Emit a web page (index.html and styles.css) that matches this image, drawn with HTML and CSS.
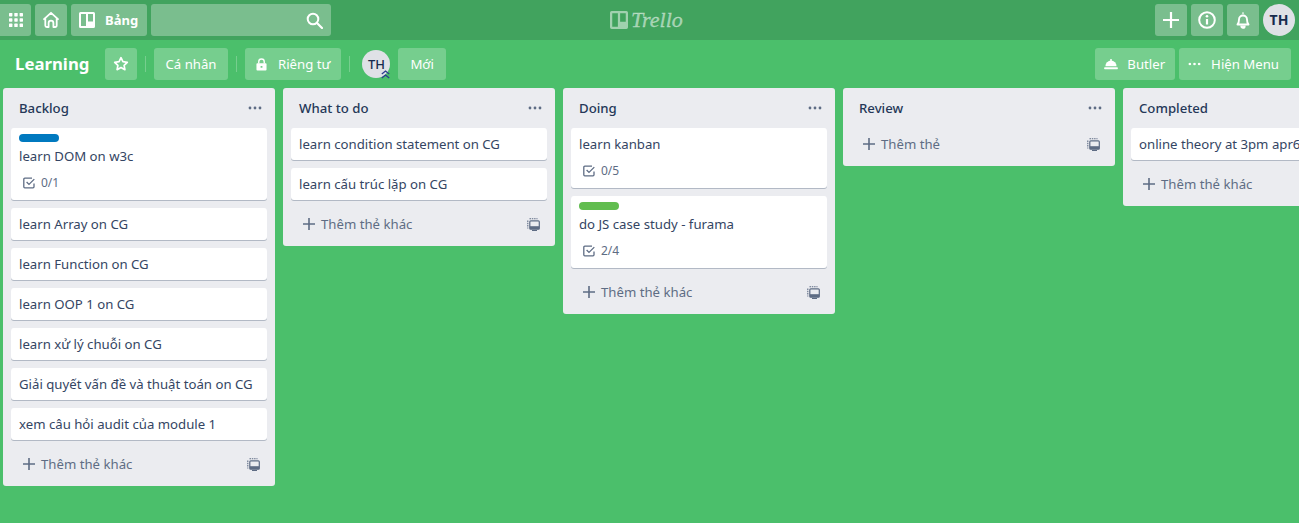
FILE: index.html
```html
<!DOCTYPE html>
<html lang="vi">
<head>
<meta charset="utf-8">
<title>Learning | Trello</title>
<link rel="stylesheet" href="styles.css">
</head>
<body>
<svg class="defs" width="0" height="0" aria-hidden="true">
  <symbol id="i-check" viewBox="0 0 12 12"><path d="M11 6.500V9.800a1 1 0 0 1-1 1H1.800a1 1 0 0 1-1-1V2.200a1 1 0 0 1 1-1H9" fill="none" stroke="currentColor" stroke-width="1.300"/><path d="M3.600 5 6 7.400 11.300 2.100" fill="none" stroke="currentColor" stroke-width="1.300"/></symbol>
  <symbol id="i-plus" viewBox="0 0 12 12"><path d="M6 0v12M0 6h12" stroke="currentColor" stroke-width="1.600"/></symbol>
  <symbol id="i-tpl" viewBox="0 0 13 13"><rect x="2.800" y="2.800" width="9.500" height="8.400" rx="1" fill="none" stroke="currentColor" stroke-width="1.200"/><rect x="2.800" y="8.200" width="9.500" height="3" fill="currentColor"/><path d="M2.500 .8h8M.8 2.500v8" stroke="currentColor" stroke-width="1.100" stroke-dasharray="1.500 .8"/><path d="M5 12.500h5" stroke="currentColor" stroke-width="1"/></symbol>
  <symbol id="i-dots" viewBox="0 0 14 4"><circle cx="2" cy="2" r="1.400" fill="currentColor"/><circle cx="7" cy="2" r="1.400" fill="currentColor"/><circle cx="12" cy="2" r="1.400" fill="currentColor"/></symbol>
  <symbol id="i-board" viewBox="0 0 16 16"><path fill-rule="evenodd" d="M1.500 0h13A1.500 1.500 0 0 1 16 1.500v13a1.500 1.500 0 0 1-1.500 1.500h-13A1.500 1.500 0 0 1 0 14.500v-13A1.500 1.500 0 0 1 1.500 0zM2 2v12h5v-12zM9 2v7.500h5v-7.500z" fill="currentColor"/></symbol>
</svg>

<header class="topbar">
  <a class="tbtn tbtn-apps"><svg width="14" height="14" viewBox="0 0 14 14" fill="currentColor"><rect width="3.400" height="3.400" rx=".6"/><rect x="5.300" width="3.400" height="3.400" rx=".6"/><rect x="10.600" width="3.400" height="3.400" rx=".6"/><rect y="5.300" width="3.400" height="3.400" rx=".6"/><rect x="5.300" y="5.300" width="3.400" height="3.400" rx=".6"/><rect x="10.600" y="5.300" width="3.400" height="3.400" rx=".6"/><rect y="10.600" width="3.400" height="3.400" rx=".6"/><rect x="5.300" y="10.600" width="3.400" height="3.400" rx=".6"/><rect x="10.600" y="10.600" width="3.400" height="3.400" rx=".6"/></svg></a>
  <a class="tbtn"><svg width="18" height="18" viewBox="0 0 18 18"><path d="M2 8.200 9 1.800l7 6.400M3.300 7.200v7.300a1.500 1.500 0 0 0 1.500 1.500h1.800v-4a2.400 2.400 0 0 1 4.800 0v4h1.800a1.500 1.500 0 0 0 1.500-1.500V7.200" fill="none" stroke="currentColor" stroke-width="1.800" stroke-linejoin="round" stroke-linecap="round"/></svg></a>
  <a class="tbtn tbtn-boards"><svg width="16" height="16"><use href="#i-board"/></svg><span>Bảng</span></a>
  <div class="search"><svg width="17" height="17" viewBox="0 0 17 17"><circle cx="7" cy="7" r="5.300" fill="none" stroke="currentColor" stroke-width="2"/><path d="m11 11 5 5" stroke="currentColor" stroke-width="2.200" stroke-linecap="round"/></svg></div>
  <div class="logo"><svg width="18" height="18" viewBox="0 0 16 16"><use href="#i-board"/></svg><span>Trello</span></div>
  <div class="top-right">
    <a class="tbtn"><svg width="18" height="18" viewBox="0 0 18 18"><path d="M9 1v16M1 9h16" stroke="currentColor" stroke-width="2.200"/></svg></a>
    <a class="tbtn"><svg width="18" height="18" viewBox="0 0 18 18"><circle cx="9" cy="9" r="7.800" fill="none" stroke="currentColor" stroke-width="2"/><path d="M9 8v5.500" stroke="currentColor" stroke-width="2.200"/><circle cx="9" cy="5.300" r="1.300" fill="currentColor"/></svg></a>
    <a class="tbtn"><svg width="18" height="18" viewBox="0 0 18 18"><path d="M3.500 13.500c1.200-1.300 1.500-2.500 1.500-5a4 4 0 0 1 8 0c0 2.500.3 3.700 1.500 5z" fill="none" stroke="currentColor" stroke-width="1.900" stroke-linejoin="round"/><path d="M7 15.200h4a2 2 0 0 1-4 0zM9 1.200v2" fill="currentColor" stroke="currentColor" stroke-width="1.200"/></svg></a>
    <div class="avatar avatar-top">TH</div>
  </div>
</header>

<section class="boardbar">
  <h1 class="board-title">Learning</h1>
  <a class="bbtn bbtn-star"><svg width="16" height="16" viewBox="0 0 16 16"><path d="m8 1.700 1.900 4 4.400.6-3.200 3 .8 4.400L8 11.600l-3.900 2.100.8-4.400-3.200-3 4.400-.6z" fill="none" stroke="currentColor" stroke-width="1.700" stroke-linejoin="round"/></svg></a>
  <span class="sep"></span>
  <a class="bbtn bbtn-team">Cá nhân</a>
  <span class="sep"></span>
  <a class="bbtn bbtn-private"><svg width="11" height="13" viewBox="0 0 12 14"><path d="M3 6V4a3 3 0 0 1 6 0v2" fill="none" stroke="currentColor" stroke-width="1.500"/><path fill-rule="evenodd" d="M1.500 5.500h9a1 1 0 0 1 1 1v6a1 1 0 0 1-1 1h-9a1 1 0 0 1-1-1v-6a1 1 0 0 1 1-1zM5 8.500v2h2v-2z" fill="currentColor"/></svg>Riêng tư</a>
  <span class="sep"></span>
  <div class="member">
    <div class="avatar avatar-board">TH</div>
    <svg class="admin" width="9" height="9" viewBox="0 0 9 9"><path d="M.8 4 4.500 1 8.200 4M.8 8 4.500 5 8.200 8" fill="none" stroke="#2c3e8f" stroke-width="1.300"/></svg>
  </div>
  <a class="bbtn bbtn-new">Mới</a>
  <div class="board-right">
    <a class="bbtn bbtn-butler"><svg width="14" height="12" viewBox="0 0 16 14" fill="currentColor"><path d="M1.500 9.500a6.500 6.500 0 0 1 13 0z"/><circle cx="8" cy="2.300" r="1.200"/><rect y="10.800" width="16" height="2.200" rx=".8"/></svg>Butler</a>
    <a class="bbtn bbtn-menu"><svg width="13" height="4" viewBox="0 0 14 4"><use href="#i-dots"/></svg>Hiện Menu</a>
  </div>
</section>

<main class="board">
  <section class="list">
    <header class="list-head"><h2>Backlog</h2><svg width="14" height="4"><use href="#i-dots"/></svg></header>
    <article class="card"><span class="label label-blue"></span><p>learn DOM on w3c</p><div class="badge"><svg width="12" height="12"><use href="#i-check"/></svg>0/1</div></article>
    <article class="card"><p>learn Array on CG</p></article>
    <article class="card"><p>learn Function on CG</p></article>
    <article class="card"><p>learn OOP 1 on CG</p></article>
    <article class="card"><p>learn xử lý chuỗi on CG</p></article>
    <article class="card"><p>Giải quyết vấn đề và thuật toán on CG</p></article>
    <article class="card"><p>xem câu hỏi audit của module 1</p></article>
    <footer class="composer"><svg width="12" height="12"><use href="#i-plus"/></svg><span>Thêm thẻ khác</span><svg class="tpl" width="13" height="13"><use href="#i-tpl"/></svg></footer>
  </section>
  <section class="list">
    <header class="list-head"><h2>What to do</h2><svg width="14" height="4"><use href="#i-dots"/></svg></header>
    <article class="card"><p>learn condition statement on CG</p></article>
    <article class="card"><p>learn cấu trúc lặp on CG</p></article>
    <footer class="composer"><svg width="12" height="12"><use href="#i-plus"/></svg><span>Thêm thẻ khác</span><svg class="tpl" width="13" height="13"><use href="#i-tpl"/></svg></footer>
  </section>
  <section class="list">
    <header class="list-head"><h2>Doing</h2><svg width="14" height="4"><use href="#i-dots"/></svg></header>
    <article class="card"><p>learn kanban</p><div class="badge"><svg width="12" height="12"><use href="#i-check"/></svg>0/5</div></article>
    <article class="card"><span class="label label-green"></span><p>do JS case study - furama</p><div class="badge"><svg width="12" height="12"><use href="#i-check"/></svg>2/4</div></article>
    <footer class="composer"><svg width="12" height="12"><use href="#i-plus"/></svg><span>Thêm thẻ khác</span><svg class="tpl" width="13" height="13"><use href="#i-tpl"/></svg></footer>
  </section>
  <section class="list">
    <header class="list-head"><h2>Review</h2><svg width="14" height="4"><use href="#i-dots"/></svg></header>
    <footer class="composer"><svg width="12" height="12"><use href="#i-plus"/></svg><span>Thêm thẻ</span><svg class="tpl" width="13" height="13"><use href="#i-tpl"/></svg></footer>
  </section>
  <section class="list">
    <header class="list-head"><h2>Completed</h2><svg width="14" height="4"><use href="#i-dots"/></svg></header>
    <article class="card"><p>online theory at 3pm apr6</p></article>
    <footer class="composer"><svg width="12" height="12"><use href="#i-plus"/></svg><span>Thêm thẻ khác</span><svg class="tpl" width="13" height="13"><use href="#i-tpl"/></svg></footer>
  </section>
</main>
</body>
</html>
```
FILE: styles.css
```css
* { box-sizing: border-box; }
html, body { height: 100%; }
body {
  margin: 0;
  overflow: hidden;
  background: #4bbf6b;
  color: #172b4d;
  font-family: "Noto Sans", sans-serif;
  font-size: 13.2px;
  line-height: 20px;
}
.defs { position: absolute; }
h1, h2, p { margin: 0; }

.topbar {
  height: 40px;
  padding: 4px 4px 4px 0;
  background: #41a35e;
  display: flex;
  gap: 4px;
  color: #fff;
  position: relative;
}
.tbtn {
  width: 32px;
  height: 32px;
  border-radius: 3px;
  background: rgba(255,255,255,.3);
  display: flex;
  align-items: center;
  justify-content: center;
  color: #fff;
}
.tbtn-apps { width: 31px; border-radius: 0 3px 3px 0; }
.tbtn-boards {
  width: 76px;
  justify-content: flex-start;
  padding-left: 8px;
  gap: 10px;
  font-size: 13px;
  font-weight: 700;
}
.search {
  width: 180px;
  height: 32px;
  border-radius: 3px;
  background: rgba(255,255,255,.3);
  display: flex;
  align-items: center;
  justify-content: flex-end;
  padding-right: 8px;
}
.logo {
  position: absolute;
  left: 610px;
  top: 10px;
  height: 20px;
  display: flex;
  align-items: center;
  gap: 3px;
  color: rgba(255,255,255,.5);
  font-family: "Liberation Serif", serif;
  font-style: italic;
  font-size: 22px;
  -webkit-text-stroke: .3px rgba(255,255,255,.5);
}
.top-right { margin-left: auto; display: flex; gap: 4px; }
.avatar {
  border-radius: 50%;
  background: #dfe1e6;
  color: #172b4d;
  display: flex;
  align-items: center;
  justify-content: center;
  font-weight: 700;
}
.avatar-top { width: 32px; height: 32px; font-size: 14px; }

.boardbar {
  height: 48px;
  padding: 8px 8px 8px 15px;
  display: flex;
  align-items: center;
  color: #fff;
}
.board-title { font-size: 16.800px; font-weight: 700; line-height: 32px; width: 74px; margin-right: 16px; white-space: nowrap; }
.bbtn {
  height: 32px;
  padding: 0 12px;
  border-radius: 3px;
  background: rgba(255,255,255,.24);
  display: flex;
  align-items: center;
  color: #fff;
}
.bbtn-star { width: 32px; padding: 0; justify-content: center; }
.bbtn-team { padding: 0 11.500px; }
.bbtn-private { padding: 0 11px; gap: 11px; }
.sep { width: 1px; height: 16px; margin: 0 8px; background: rgba(255,255,255,.24); }
.member { position: relative; margin: 0 8px 0 4px; }
.avatar-board { width: 28px; height: 28px; font-size: 13px; font-weight: 500; }
.admin { position: absolute; right: 0; bottom: -1px; }
.board-right { margin-left: auto; display: flex; gap: 4px; }
.bbtn-butler { padding: 0 10px 0 9px; gap: 9px; }
.bbtn-menu { padding-left: 9px; gap: 10px; }

.board {
  padding: 0 0 0 3px;
  display: flex;
  align-items: flex-start;
  gap: 8px;
}
.list {
  width: 272px;
  flex: none;
  background: #ebecf0;
  border-radius: 3px;
  padding: 0 8px;
}
.list-head {
  height: 40px;
  padding: 0 5px 0 8px;
  display: flex;
  align-items: center;
  justify-content: space-between;
  color: #5e6c84;
}
.list-head h2 { font-size: 13.200px; font-weight: 500; color: #253858; line-height: 20px; }
.card {
  background: #fff;
  border-radius: 3px;
  box-shadow: 0 1px 0 rgba(9,30,66,.25);
  padding: 6px 8px;
  margin-bottom: 8px;
  color: #344563;
  white-space: nowrap;
}
.label { display: block; width: 40px; height: 8px; border-radius: 4px; margin-bottom: 4px; }
.label-blue { background: #0079bf; }
.label-green { background: #61bd4f; }
.badge {
  height: 24px;
  margin-top: 5px;
  padding-left: 4px;
  display: flex;
  align-items: center;
  gap: 6px;
  font-size: 12px;
  color: #5e6c84;
}
.card:has(.badge) { padding-bottom: 5px; }
.composer {
  height: 32px;
  margin-bottom: 6px;
  padding: 0 8px 0 12px;
  display: flex;
  align-items: center;
  gap: 6px;
  color: #5e6c84;
}
.tpl { margin-left: auto; margin-right: -1px; }
```
